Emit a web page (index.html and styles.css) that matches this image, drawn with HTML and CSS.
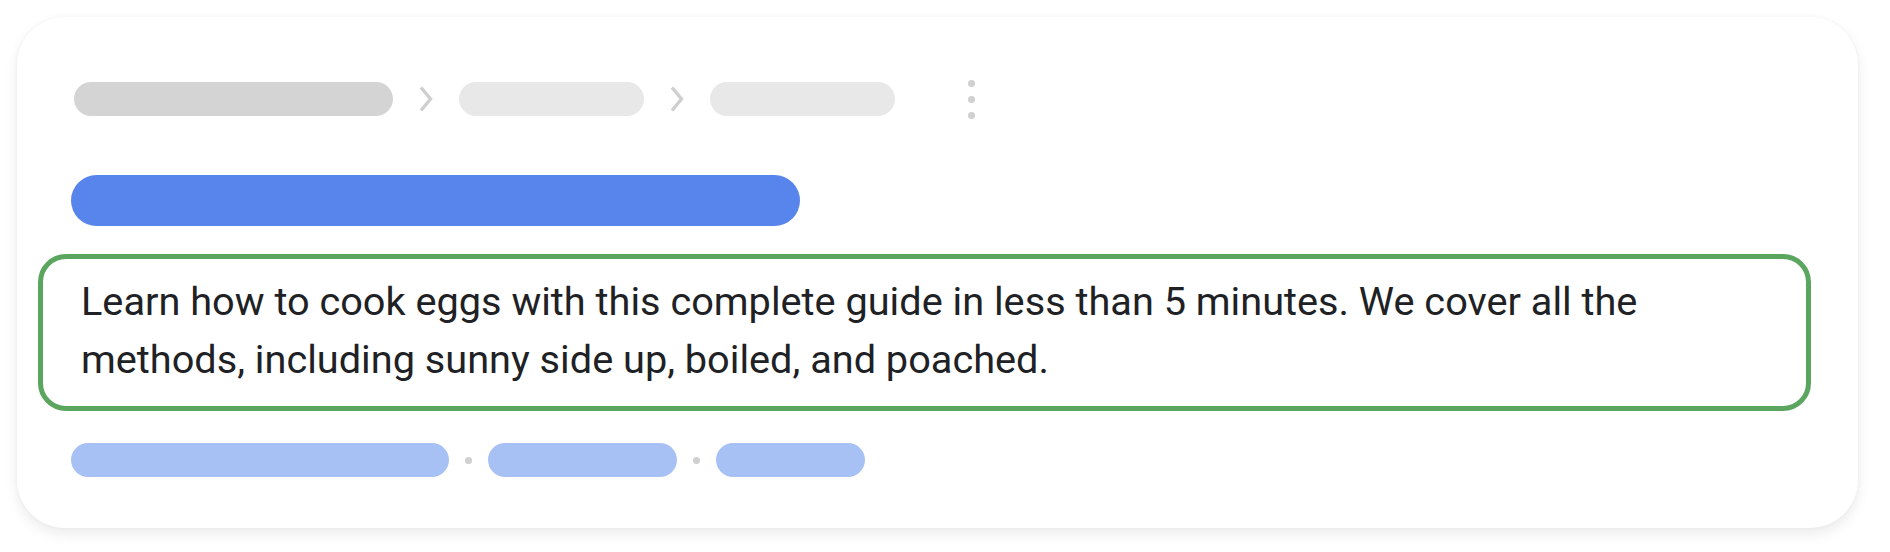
FILE: index.html
```html
<!DOCTYPE html>
<html lang="en">
<head>
  <meta charset="UTF-8" />
  <meta name="viewport" content="width=device-width, initial-scale=1.0" />
  <title>Search result snippet</title>
  <link rel="stylesheet" href="styles.css">
</head>
<body>
  <div class="card">
    <!-- Breadcrumb placeholders -->
    <div class="crumbs">
      <span class="pill pill-dark crumb-1"></span>
      <svg class="chevron" viewBox="0 0 14 26" aria-hidden="true">
        <polyline points="2,1.5 11.5,13 2,24.5" />
      </svg>
      <span class="pill pill-light crumb-2"></span>
      <svg class="chevron" viewBox="0 0 14 26" aria-hidden="true">
        <polyline points="2,1.5 11.5,13 2,24.5" />
      </svg>
      <span class="pill pill-light crumb-3"></span>
      <div class="more">
        <span></span><span></span><span></span>
      </div>
    </div>

    <!-- Title placeholder -->
    <div class="title-bar"></div>

    <!-- Highlighted description -->
    <div class="snippet">
      Learn how to cook eggs with this complete guide in less than 5 minutes. We cover all the methods, including sunny side up, boiled, and poached.
    </div>

    <!-- Sitelinks placeholders -->
    <div class="links">
      <span class="pill pill-blue link-1"></span>
      <span class="sep"></span>
      <span class="pill pill-blue link-2"></span>
      <span class="sep"></span>
      <span class="pill pill-blue link-3"></span>
    </div>
  </div>
</body>
</html>
```

FILE: styles.css
```css
body {
  margin: 0;
  padding: 17px;
  background: #fff;
  font-family: Roboto, "Noto Sans", Arial, sans-serif;
  color: #202124;
}
.card {
  box-sizing: border-box;
  width: 1841px;
  height: 511px;
  padding: 65px 54px 0 54px;
  background: #fff;
  border-radius: 48px;
  box-shadow: 0 6px 14px rgba(0, 0, 0, 0.08), 0 0 4px rgba(0, 0, 0, 0.04);
}
.pill {
  display: block;
  height: 34px;
  border-radius: 17px;
}
.pill-dark {
  background: #d3d4d3;
}
.pill-light {
  background: #e8e8e8;
}
.pill-blue {
  background: #a8c1f4;
}
.crumbs {
  display: flex;
  align-items: center;
  gap: 26px;
  height: 34px;
  margin-left: 3px;
}
.crumb-1 {
  width: 319px;
}
.crumb-2,
.crumb-3 {
  width: 185px;
}
.chevron {
  width: 14px;
  height: 26px;
}
.chevron polyline {
  fill: none;
  stroke: #cfcfcf;
  stroke-width: 3.4;
}
.more {
  display: flex;
  flex-direction: column;
  gap: 9px;
  margin-left: 47px;
}
.more span {
  width: 7px;
  height: 7px;
  border-radius: 50%;
  background: #d0d0d0;
}
.title-bar {
  width: 729px;
  height: 51px;
  margin-top: 59px;
  border-radius: 26px;
  background: #5785ec;
}
.snippet {
  margin: 28px -7px 0 -33px;
  padding: 14px 36px 17px 38px;
  border: 5px solid #5ba65f;
  border-radius: 28px;
  font-size: 39.7px;
  line-height: 58px;
}
.links {
  display: flex;
  align-items: center;
  gap: 16px;
  margin-top: 32px;
}
.link-1 {
  width: 378px;
}
.link-2 {
  width: 189px;
}
.link-3 {
  width: 149px;
}
.sep {
  width: 7px;
  height: 7px;
  border-radius: 50%;
  background: #d0d0d0;
}
```
